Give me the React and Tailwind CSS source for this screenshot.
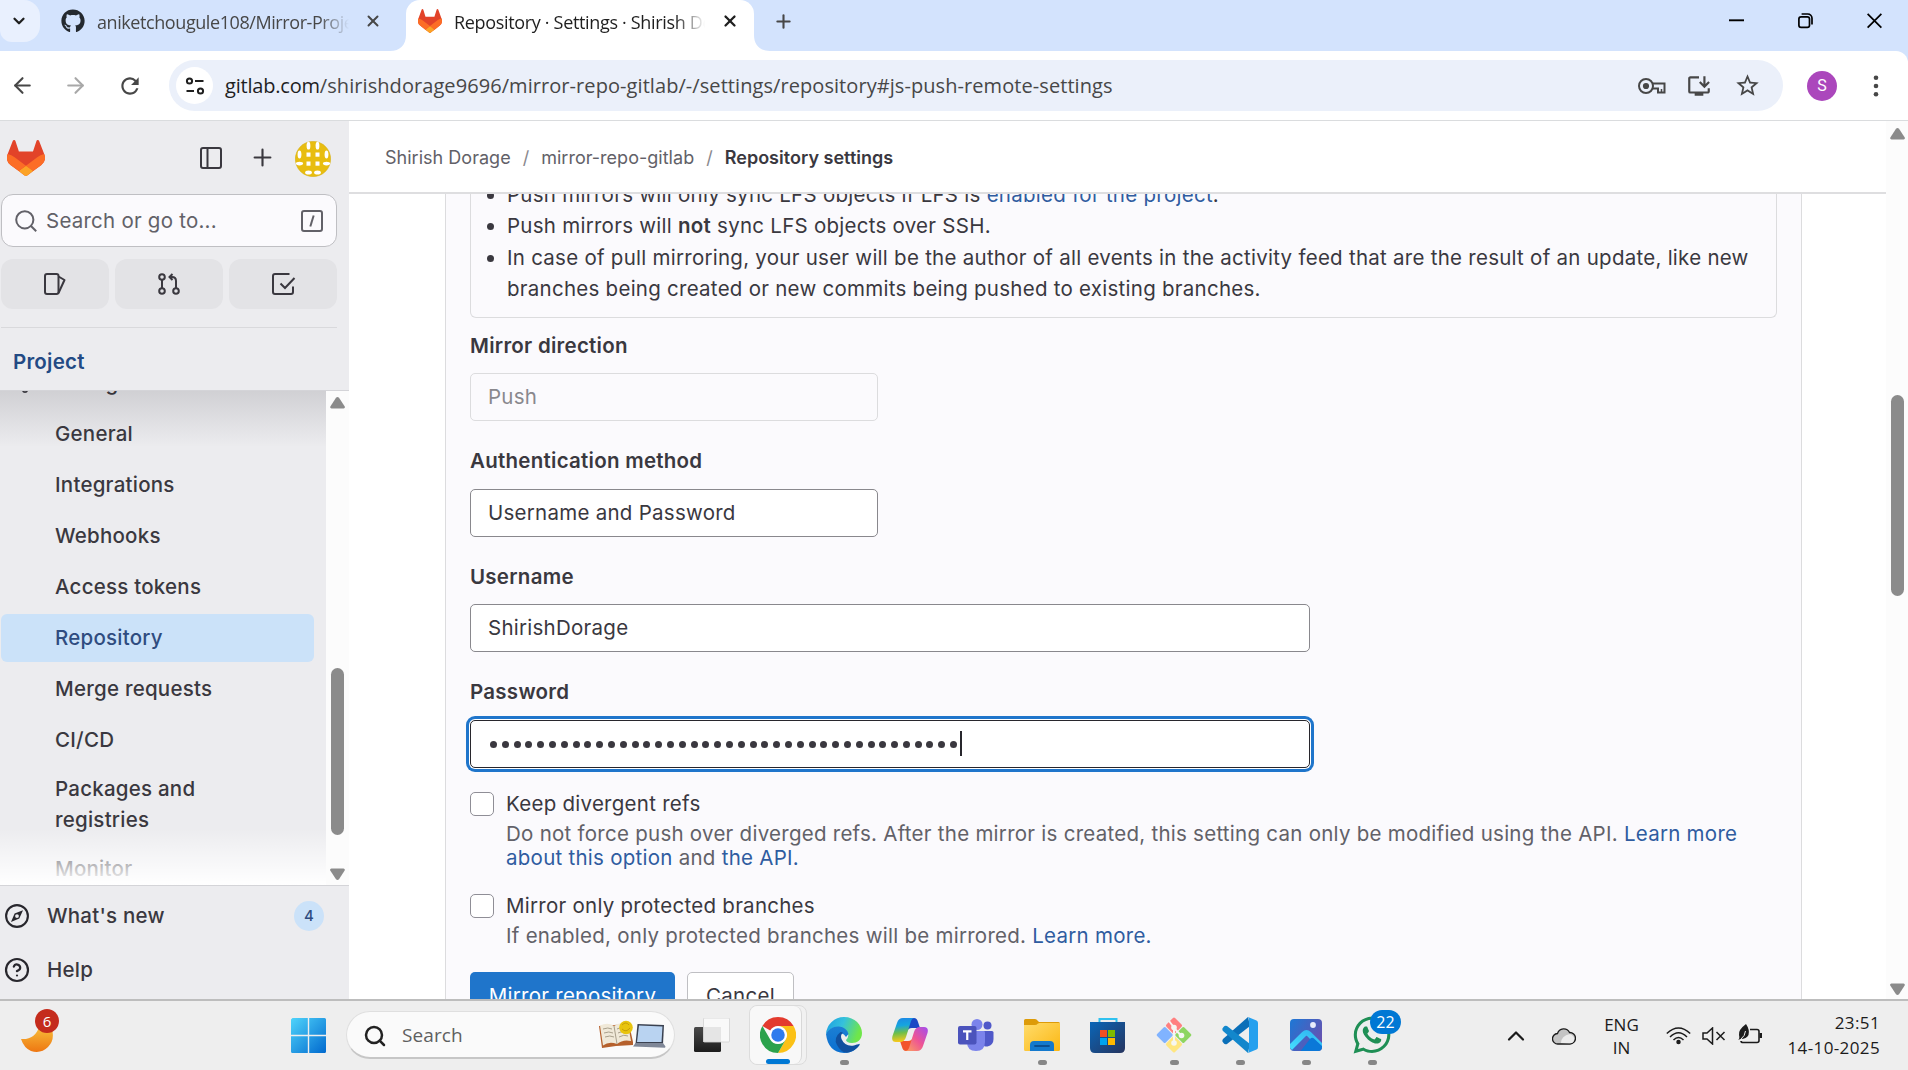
import React from "react";
import { ArrowLeft, ArrowRight, ChevronDown, ChevronUp, Plus, Search, X, CircleHelp, Settings } from "lucide-react";
import { FaGithub, FaWhatsapp } from "react-icons/fa";
import { MdRefresh, MdOutlineInstallDesktop, MdStarBorder } from "react-icons/md";

const INTER = "font-['Inter','Liberation_Sans',sans-serif]";
const SEGOE = "font-['Open_Sans','Noto_Sans',sans-serif]";

function Tanuki({ className }) {
  return (
    <svg viewBox="0 0 25 24" preserveAspectRatio="none" className={className}>
      <path fill="#E24329" d="m24.507 9.5-.034-.09L21.082.562a.896.896 0 0 0-1.694.091l-2.29 7.01H7.825L5.535.653a.898.898 0 0 0-1.694-.09L.451 9.411.416 9.5a6.297 6.297 0 0 0 2.09 7.278l.012.01.03.022 5.16 3.867 2.56 1.935 1.554 1.176a1.051 1.051 0 0 0 1.268 0l1.555-1.176 2.56-1.935 5.197-3.89.014-.01A6.297 6.297 0 0 0 24.507 9.5Z" />
      <path fill="#FC6D26" d="m24.507 9.5-.034-.09a11.44 11.44 0 0 0-4.56 2.051l-7.447 5.632 4.742 3.584 5.197-3.89.014-.01A6.297 6.297 0 0 0 24.507 9.5Z" />
      <path fill="#FCA326" d="m7.707 20.677 2.56 1.935 1.555 1.176a1.051 1.051 0 0 0 1.268 0l1.555-1.176 2.56-1.935-4.743-3.584-4.755 3.584Z" />
      <path fill="#FC6D26" d="M5.01 11.461a11.43 11.43 0 0 0-4.56-2.05L.416 9.5a6.297 6.297 0 0 0 2.09 7.278l.012.01.03.022 5.16 3.867 4.745-3.584-7.444-5.632Z" />
    </svg>
  );
}

function TabStrip() {
  return (
    <div className={`flex h-[51px] shrink-0 bg-[#d3e3fd] ${SEGOE}`}>
      <div className="flex h-[42px] w-10 shrink-0 items-center justify-center rounded-r-2xl rounded-bl-xl bg-[#e9f0fe]">
        <ChevronDown className="mr-0.5 size-[18px] text-[#1f1f1f]" strokeWidth={3} />
      </div>
      <div className="flex h-[42px] w-[366px] shrink-0 items-center pl-[21px]">
        <FaGithub className="size-6 shrink-0 text-[#24292f]" />
        <div className="ml-3 w-[252px] overflow-hidden whitespace-nowrap mask-r-from-88% pt-0.5 text-[18px] leading-6 tracking-[-0.42px] text-[#474747]">
          aniketchougule108/Mirror-Project
        </div>
        <X className="ml-[15px] size-[18px] shrink-0 text-[#474747]" strokeWidth={2.6} />
      </div>
      <div className="relative flex h-[51px] w-[348px] shrink-0 items-start rounded-t-[14px] bg-white pl-3">
        <svg className="absolute bottom-0 -left-4 size-4" viewBox="0 0 16 16"><path fill="#fff" d="M16 0v16H0C10 16 16 10 16 0Z" /></svg>
        <svg className="absolute -right-4 bottom-0 size-4" viewBox="0 0 16 16"><path fill="#fff" d="M0 0v16h16C6 16 0 10 0 0Z" /></svg>
        <Tanuki className="mt-[9px] h-6 w-6 shrink-0" />
        <div className="mt-[7px] ml-3 w-[251px] overflow-hidden pt-[3px] whitespace-nowrap mask-r-from-88% text-[18px] leading-6 tracking-[-0.33px] text-[#1f1f1f]">
          Repository · Settings · Shirish Dorage
        </div>
        <X className="mt-3 ml-4 size-[18px] shrink-0 text-[#1f1f1f]" strokeWidth={3} />
      </div>
      <Plus className="mt-[11px] ml-[19px] size-[21px] text-[#474747]" strokeWidth={2.4} />
      <div className="mt-[13px] mr-[26px] ml-auto flex h-4 gap-[54px] text-black">
        <svg className="h-4 w-[15px]" viewBox="0 0 15 16"><path d="M0 7.3h15" stroke="currentColor" strokeWidth="1.9" /></svg>
        <svg className="h-4 w-[15px]" viewBox="0 0 15 16" fill="none" stroke="currentColor" strokeWidth="1.7"><rect x="0.9" y="3.8" width="10.6" height="10.6" rx="2.2" /><path d="M3.6 1h6.2A4.2 4.2 0 0 1 14 5.2v6.2" /></svg>
        <svg className="h-4 w-[15px]" viewBox="0 0 15 16"><path d="m.6.9 13.8 13.8M14.4.9.6 14.7" stroke="currentColor" strokeWidth="1.8" /></svg>
      </div>
    </div>
  );
}

function Toolbar() {
  return (
    <div className="h-[70px] shrink-0 bg-[#d3e3fd]">
      <div className="flex h-[70px] items-center rounded-tr-xl border-b border-[#dadcde] bg-white text-[#474747]">
        <ArrowLeft className="ml-[10px] size-[25px]" strokeWidth={2} />
        <ArrowRight className="ml-7 size-[25px] text-[#a8a8a8]" strokeWidth={2} />
        <MdRefresh className="ml-[29px] size-[26px]" />
        <div className="ml-[26px] flex h-[51px] w-[1614px] items-center rounded-full bg-[#ebf0fa]">
          <div className="ml-[7px] flex size-[37px] items-center justify-center rounded-full bg-white">
            <svg className="size-5" viewBox="0 0 20 20" fill="none" stroke="#1f1f1f" strokeWidth="2">
              <circle cx="4.5" cy="5" r="2.6" /><path d="M10 5h8.5M1.5 15H9" /><circle cx="15.5" cy="15" r="2.6" />
            </svg>
          </div>
          <div className={`ml-3 flex text-[20px] leading-[26px] whitespace-nowrap ${SEGOE}`}>
            <span className="tracking-[-0.2px] text-[#1f1f1f]">gitlab.com</span>
            <span className="tracking-[0.07px]">/shirishdorage9696/mirror-repo-gitlab/-/settings/repository#js-push-remote-settings</span>
          </div>
          <svg className="ml-auto h-[18px] w-[28px]" viewBox="0 0 28 18" fill="none" stroke="currentColor" strokeWidth="2">
            <circle cx="8" cy="9" r="7" /><circle cx="8" cy="9" r="3.1" fill="currentColor" stroke="none" />
            <path d="M14.5 6.5H26.5V15.5H20V11.5H14.5" /><path d="M23.5 15.5V12" strokeWidth="1.5" />
          </svg>
          <MdOutlineInstallDesktop className="ml-[20px] size-[26px]" />
          <MdStarBorder className="mr-[22px] ml-[22px] size-[27px]" />
        </div>
        <div className="ml-6 flex size-[30px] items-center justify-center rounded-full bg-[#ab47bc] font-['Roboto',sans-serif] text-[16px] text-white">S</div>
        <svg className="ml-[36px] h-[22px] w-[6px]" viewBox="0 0 6 22" fill="#474747"><circle cx="3" cy="2.8" r="2.3" /><circle cx="3" cy="11" r="2.3" /><circle cx="3" cy="19.2" r="2.3" /></svg>
      </div>
    </div>
  );
}

function Scrollbar({ className, thumb }) {
  const arrow = "M6 .8q1.5-1.4 3 0l5.6 8.4q1 2-1 2.3H1.5q-2-.3-1-2.3Z";
  return (
    <div className={`flex flex-col items-center bg-[#fcfcfc] ${className}`}>
      <svg className="h-3 w-[15px] shrink-0" viewBox="0 0 15 12"><path fill="#8b8b8b" d={arrow} /></svg>
      <div className={`w-[13px] shrink-0 rounded-full bg-[#8b8b8b] ${thumb}`} />
      <svg className="mt-auto h-3 w-[15px] shrink-0 rotate-180" viewBox="0 0 15 12"><path fill="#8b8b8b" d={arrow} /></svg>
    </div>
  );
}

function Avatar() {
  return (
    <svg className="size-9" viewBox="0 0 36 36">
      <circle cx="18" cy="18" r="17.6" fill="#e8bd10" stroke="#d5ae10" strokeWidth="0.6" />
      <g fill="#fff">
        {[13.5, 22.5].map((x) => (
          <g key={x}>
            <ellipse cx={x} cy="4.7" rx="1.9" ry="3.9" />
            <rect x={x - 2} y="11.5" width="4" height="4.2" />
            <rect x={x - 2} y="20.5" width="4" height="4.2" />
            <ellipse cx={x} cy="31.5" rx="3.4" ry="2" />
          </g>
        ))}
        {[4.5, 31.5].map((x) => (
          <g key={x}>
            <ellipse cx={x} cy="13.6" rx="1.9" ry="4" />
            <ellipse cx={x} cy="22.6" rx="3.6" ry="1.8" />
          </g>
        ))}
      </g>
    </svg>
  );
}

const single = "pt-1.5 pb-2";
const double = "py-1.5";
const navItems = [
  ["General", single],
  ["Integrations", single],
  ["Webhooks", single],
  ["Access tokens", single],
  ["Repository", `${single} bg-[#cbe2f9] text-[#2f4c80]`],
  ["Merge requests", single],
  ["CI/CD", single],
  ["Packages and registries", double],
  ["Monitor", double],
];

function Sidebar() {
  return (
    <aside className={`flex w-[349px] shrink-0 flex-col bg-[#ececef] text-[20.5px] tracking-[0.23px] text-[#3a383f] ${INTER}`}>
      <div className="flex h-[73px] shrink-0 items-center pt-0.5 pl-[7px]">
        <Tanuki className="-mt-0.5 h-9 w-[38px]" />
        <svg className="-mt-0.5 ml-[155px] size-[22px]" viewBox="0 0 22 22" fill="none" stroke="#3a383f" strokeWidth="2"><rect x="1" y="1" width="20" height="20" rx="2" /><path d="M7.5 1v20" /></svg>
        <Plus className="-mt-0.5 mr-[19px] ml-[27px] size-[27px]" strokeWidth={1.9} />
        <Avatar />
      </div>
      <div className="ml-px flex h-[53px] w-[336px] shrink-0 items-center rounded-[12px] border border-[#bfbfc3] bg-[#fbfafd] pl-[13px] text-[#626168]">
        <svg className="size-[22px]" viewBox="0 0 22 22" fill="none" stroke="currentColor" strokeWidth="2"><circle cx="9.8" cy="9.8" r="8.6" /><path d="m16 16 5.2 5.2" /></svg>
        <span className="mt-px ml-[9px]">Search or go to...</span>
        <svg className="mr-[13px] ml-auto size-[22px]" viewBox="0 0 22 22" fill="none" stroke="currentColor" strokeWidth="2"><rect x="1" y="1" width="20" height="20" rx="2" /><path d="M12.7 5.5 9.3 16.5" /></svg>
      </div>
      <div className="mt-3 ml-px flex w-[336px] shrink-0 gap-1.5">
        <div className="flex h-[50px] flex-1 items-center justify-center rounded-[12px] bg-[#e3e3e6]">
          <svg className="size-[22px]" viewBox="0 0 22 22" fill="none" stroke="#3a383f" strokeWidth="2"><rect x="1" y="1" width="13.5" height="20" rx="2" /><path d="M14.5 3.5 20.5 7 14.5 20" strokeLinejoin="round" /></svg>
        </div>
        <div className="flex h-[50px] flex-1 items-center justify-center rounded-[12px] bg-[#e3e3e6]">
          <svg className="size-[22px]" viewBox="0 0 22 22" fill="none" stroke="#3a383f" strokeWidth="2"><circle cx="4" cy="4" r="2.8" /><circle cx="4" cy="18" r="2.8" /><circle cx="18" cy="18" r="2.8" /><path d="M4 7v8M18 15V8q0-4-4-4h-2M14.5 1 11.5 4l3 3" /></svg>
        </div>
        <div className="flex h-[50px] flex-1 items-center justify-center rounded-[12px] bg-[#e3e3e6]">
          <svg className="ml-0.5 h-[22px] w-6" viewBox="0 0 24 22" fill="none" stroke="#3a383f" strokeWidth="2"><path d="M17.5 1H3Q1 1 1 3v16q0 2 2 2h16q2 0 2-2v-5.5M8.5 10.5l4.5 4.5L22.5 5" /></svg>
        </div>
      </div>
      <div className="mt-[18px] ml-px h-px w-[336px] shrink-0 bg-[#d9d9dc]" />
      <div className="flex h-[63px] shrink-0 items-center border-b border-[#d4d4d8] pt-1.5 pl-[13px] font-semibold text-[#234a84]">Project</div>

      <div className="flex min-h-0 flex-1">
        <div className="relative h-[494px] w-[326px] overflow-hidden">
          <div className="-mt-8 flex flex-col gap-[3px] font-medium">
            <div className="flex h-12 items-center gap-3 pl-[14px]"><Settings className="size-[22px]" /><span>Settings</span></div>
            {navItems.map(([t, cls]) => (
              <div key={t} className={`ml-px flex min-h-12 w-[313px] items-center rounded-[6px] pr-20 pl-[54px] leading-[31px] ${cls}`}>
                {t}
              </div>
            ))}
          </div>
          <div className="absolute inset-x-0 top-0 h-14 bg-linear-to-b from-[#28272d24] to-transparent" />
          <div className="absolute inset-x-0 bottom-0 h-14 bg-linear-to-t from-white to-transparent" />
        </div>
        <Scrollbar className="w-[23px] pt-1.5 pb-[5px]" thumb="mt-[259px] h-[167px]" />
      </div>

      <div className="flex h-[114px] shrink-0 flex-col border-t border-[#d4d4d8] pt-[5px] font-medium">
        <div className="flex h-[50px] items-center pl-[5px]">
          <svg className="size-6" viewBox="0 0 24 24" fill="none" stroke="#28272d" strokeWidth="2.1"><circle cx="12" cy="12" r="10.9" /><path fill="#28272d" fillRule="evenodd" stroke="none" d="M18 6.2 14.3 14.5 6 17.9 9.6 9.6ZM12 10.2a1.9 1.9 0 1 0 0 3.8 1.9 1.9 0 0 0 0-3.8Z" /></svg>
          <span className="ml-[18px]">What's new</span>
          <div className="mr-[25px] ml-auto flex size-[30px] items-center justify-center rounded-full bg-[#cbe2f9] text-[15px] tracking-normal text-[#2f4c80]">4</div>
        </div>
        <div className="mt-1 flex h-[50px] items-center pl-[5px]">
          <CircleHelp className="size-6 scale-110 text-[#28272d]" strokeWidth={2} />
          <span className="ml-[18px]">Help</span>
        </div>
      </div>
    </aside>
  );
}

function Check({ label, children, className = "" }) {
  return (
    <div className={`flex shrink-0 ${className}`}>
      <div className="mt-[3px] size-6 shrink-0 rounded-[5px] border border-[#8f8e96] bg-white" />
      <div className="ml-3">
        <div className="pt-px leading-[28px]">{label}</div>
        <div className="mt-1 leading-6 text-[#626168]">{children}</div>
      </div>
    </div>
  );
}

function Main() {
  const field = "flex h-12 shrink-0 items-center rounded-[5px] border pl-[17px]";
  const label = "shrink-0 leading-[31px] font-semibold";
  const link = "text-[#2f5ca0]";
  return (
    <main className={`flex min-w-0 flex-1 flex-col bg-white text-[20.5px] tracking-[0.26px] text-[#3a383f] ${INTER}`}>
      <div className="flex h-[73px] shrink-0 items-center border-b-2 border-[#dedee0] pt-px pl-9 text-[18px] tracking-[0.02px] text-[#626168]">
        <span>Shirish Dorage</span>
        <span className="mx-3 text-[#89888d]">/</span>
        <span>mirror-repo-gitlab</span>
        <span className="mx-3 text-[#89888d]">/</span>
        <span className="font-semibold text-[#3a383f]">Repository settings</span>
      </div>
      <div className="ml-24 flex h-[805px] w-[1357px] flex-col overflow-hidden border-x border-[#dcdcde] bg-[#fbfafd] pl-6 whitespace-nowrap">
        <div className="h-[124px] w-[1307px] shrink-0 rounded-b-[6px] border border-t-0 border-[#dcdcde] pl-9 leading-[31px]">
          <ul className="-mt-[15px] flex list-disc flex-col">
            <li>Push mirrors will only sync LFS objects if LFS is <span className={link}>enabled for the project</span>.</li>
            <li>Push mirrors will <b className="font-semibold">not</b> sync LFS objects over SSH.</li>
            <li className="mt-px">In case of pull mirroring, your user will be the author of all events in the activity feed that are the result of an update, like new<br />branches being created or new commits being pushed to existing branches.</li>
          </ul>
        </div>
        <div className={`mt-3 ${label}`}>Mirror direction</div>
        <div className={`mt-3 w-[408px] border-[#dcdcde] text-[#89888d] ${field}`}>Push</div>
        <div className={`mt-6 ${label}`}>Authentication method</div>
        <div className={`mt-[13px] w-[408px] border-[#89888d] bg-white ${field}`}>Username and Password</div>
        <div className={`mt-6 ${label}`}>Username</div>
        <div className={`mt-3 w-[840px] border-[#89888d] bg-white ${field}`}>ShirishDorage</div>
        <div className={`mt-6 ${label}`}>Password</div>
        <div className={`mt-[13px] w-[840px] border-[#28272d] bg-white ring-[3px] ring-[#1f75cb] ring-offset-1 ring-offset-white ${field}`}>
          <div className="flex gap-[4.8px] pt-px pl-0.5">
            {Array.from({ length: 40 }, (_, i) => <i key={i} className="size-[7px] rounded-full bg-[#3a383f]" />)}
          </div>
          <div className="mb-0.5 ml-[3px] h-[25px] w-[1.5px] bg-[#28272d]" />
        </div>
        <Check label="Keep divergent refs" className="mt-[21px]">
          Do not force push over diverged refs. After the mirror is created, this setting can only be modified using the API. <span className={link}>Learn more</span><br />
          <span className={link}>about this option</span> and <span className={link}>the API.</span>
        </Check>
        <Check label="Mirror only protected branches" className="mt-[21px]">
          If enabled, only protected branches will be mirrored. <span className={link}>Learn more.</span>
        </Check>
        <div className="mt-[24px] flex shrink-0 gap-3">
          <div className="flex h-12 w-[205px] items-center justify-center rounded-[5px] bg-[#1f75cb] text-white">Mirror repository</div>
          <div className="flex h-12 w-[107px] items-center justify-center rounded-[5px] border border-[#bfbfc3] bg-white">Cancel</div>
        </div>
      </div>
    </main>
  );
}

function TaskIcon({ children, dot = "bg-transparent w-[9px]" }) {
  return (
    <div className="relative flex h-[68px] w-[66px] shrink-0 flex-col items-center pt-4">
      <div className="relative size-9">{children}</div>
      <div className={`absolute bottom-1 h-[5px] rounded-full ${dot}`} />
    </div>
  );
}

const running = "w-[9px] bg-[#868686]";

function Taskbar() {
  return (
    <div className={`flex h-[71px] shrink-0 border-t-2 border-[#bdbdbd] bg-[#eeeeee] ${SEGOE}`}>
      <div className="relative mt-[9px] ml-[18px] h-[44px] w-[44px] shrink-0">
        <svg className="absolute top-[17px] left-[2px] h-[26px] w-[34px]" viewBox="0 0 34 26">
          <defs><linearGradient id="moon" x2="0" y2="1"><stop stopColor="#f7bd3a" /><stop offset="1" stopColor="#ee7712" /></linearGradient></defs>
          <path fill="url(#moon)" d="M1 12Q15 13 19 0L32 2Q35 13 28 20 21 27 11 24 4 21 1 12Z" />
        </svg>
        <div className="absolute top-[-1px] left-[17px] flex size-6 items-center justify-center rounded-full bg-[#c42b1c] text-[15px] text-white">6</div>
      </div>
      <svg className="mt-[17px] ml-[229px] size-[35px] shrink-0" viewBox="0 0 35 35">
        <defs><linearGradient id="win" gradientUnits="userSpaceOnUse" x1="0" y1="0" x2="35" y2="35"><stop stopColor="#4fd4fb" /><stop offset="1" stopColor="#0169ce" /></linearGradient></defs>
        <path fill="url(#win)" d="M1.5 0H16.8v16.8H0V1.5ZM18.2 0h15.3q1.5 0 1.5 1.5v15.3H18.2ZM0 18.2h16.8V35H1.5Q0 35 0 33.5ZM18.2 18.2H35v15.3q0 1.5-1.5 1.5H18.2Z" />
      </svg>
      <div className="mt-[10px] ml-5 flex h-12 w-[329px] shrink-0 items-center rounded-full border border-b-2 border-[#dfdfdf] border-b-[#c6c6c6] bg-[#fafafa] pt-0.5 pl-4">
        <Search className="size-6 text-[#222]" strokeWidth={2.5} />
        <span className="ml-[15px] text-[19px] tracking-[0.1px] text-[#5f5f5f]">Search</span>
        <svg className="mr-[7px] mb-0.5 ml-auto h-[30px] w-[68px]" viewBox="0 0 68 30">
          <path fill="#b5602c" d="M0 6l3 22 14-2 17-1V22L30 4Z" />
          <path fill="#f0e9d8" d="M1 5.5Q9 2 15 6L18 24Q10 21 4 25.5ZM15 6Q22 1 29 4L32 21Q24 19 18 24Z" />
          <path stroke="#a9a08c" strokeWidth="1" fill="none" d="M4 9q5-2 9 0M5 13q5-2 9 0M6 17q5-2 9 0M18 9q5-3 9-1M19 13q5-3 9-1M20 17q5-3 9-1M15 6l3 18" />
          <circle cx="27" cy="7.5" r="6.8" fill="#e8c40e" /><path d="M23 5q4-4 7 0M23 9q4 4 8-1" stroke="#c79f06" fill="none" />
          <path fill="#3a4150" d="M38.5 4 65 5l-1 19H36.5Z" /><path fill="#b9d3f1" d="M40 5.5 63.5 6.5l-1 15.5H38Z" />
          <path fill="#7f8797" d="M36.5 23H64l2.5 3.5-.5 1.2L34 26.5Z" />
        </svg>
      </div>
      <div className="ml-[13px] flex shrink-0">
        <div className="flex w-[48px] pt-[17px] pl-[6px]">
          <svg className="h-[35px] w-9" viewBox="0 0 36 35">
            <defs><linearGradient id="tv" x2="0" y2="1"><stop stopColor="#4a4a4a" /><stop offset="1" stopColor="#1c1c1c" /></linearGradient></defs>
            <rect y="9" width="27" height="25" rx="1.5" fill="url(#tv)" /><path d="M9 9h18v15H9Z" fill="#b5b5b5" /><rect x="9.5" width="26" height="24" rx="1" fill="#fff" fillOpacity=".65" stroke="#d2d2d2" strokeWidth=".8" />
          </svg>
        </div>
        <div className="relative mt-1 ml-[13px] flex h-[60px] w-[58px] rounded-lg border border-[#dcdcdc] bg-[#f1f1f1]">
          <div className="relative flex h-full w-[52px] justify-center rounded-lg border-r border-[#d8d8d8] bg-[#f8f8f8] pt-[11px]">
            <svg className="ml-[5px] size-9" viewBox="0 0 48 48">
              <path fill="#e33b2e" d="M24 0A24 24 0 0 1 44.8 12H24A12 12 0 0 0 13.6 18L3.2 12A24 24 0 0 1 24 0Z" />
              <path fill="#fbc116" d="M44.8 12A24 24 0 0 1 24 48L34.4 30A12 12 0 0 0 34.4 18 12 12 0 0 0 24 12Z" />
              <path fill="#2ba24c" d="M24 48A24 24 0 0 1 3.2 12L13.6 30A12 12 0 0 0 34.4 30Z" />
              <circle cx="24" cy="24" r="11.5" fill="#fff" /><circle cx="24" cy="24" r="9" fill="#2f7bed" />
            </svg>
            <div className="absolute bottom-0 left-4 h-[5px] w-6 rounded-full bg-[#0078d4]" />
          </div>
        </div>
      </div>
      <div className="ml-1 flex shrink-0">
        <TaskIcon dot={running}>
          <svg className="size-9" viewBox="0 0 36 36">
            <defs>
              <linearGradient id="e1" x2="1" y2=".3"><stop stopColor="#1b9de2" /><stop offset=".5" stopColor="#35c1dc" /><stop offset="1" stopColor="#6fe64a" /></linearGradient>
              <linearGradient id="e2" x2="0" y2="1"><stop stopColor="#1c7fd4" /><stop offset="1" stopColor="#0a6fd0" /></linearGradient>
            </defs>
            <path fill="url(#e1)" d="M0 17A18 18 0 0 1 18 0C29 0 36 8 36 16 36 23 31 26 26 26 22 26 20 24.5 20 23Q23 20 22 17 20 11 13 10 4 10 0 17Z" />
            <path fill="url(#e2)" d="M0 17Q4 9 13 9.5 21 10.5 22.5 17L20 20Q16 14 14 19 12 28 22 30.5 29 31 34 26.5 29 36 18 36 2 35 0 17Z" />
            <path fill="#10509f" d="M14.5 15Q7 21 11 28 15 35.5 21 35.7 30 34 34 27.5 33 26.5 28 28.5 19 30 15.5 22 14 18 17 15.5Z" />
          </svg>
        </TaskIcon>
        <TaskIcon>
          <svg className="size-9" viewBox="0 0 36 36">
            <defs>
              <linearGradient id="c1" x2=".1" y2="1"><stop stopColor="#1d86e6" /><stop offset=".35" stopColor="#15a5e0" /><stop offset=".65" stopColor="#6fbf4a" /><stop offset="1" stopColor="#f6c91c" /></linearGradient>
              <linearGradient id="c2" x1="1" x2="0" y2="1"><stop stopColor="#a24ef0" /><stop offset=".5" stopColor="#ee5494" /><stop offset="1" stopColor="#fca55c" /></linearGradient>
            </defs>
            <path fill="#1a49c5" d="M17 1h5q3 0 4 4l2 6h-8q-4 0-5 4Z" />
            <path fill="#f2552c" d="M19 34h-5q-3 0-4-4l-2-6h8q4 0 5-4Z" />
            <path fill="url(#c1)" d="M11 1H23q-3 0-4 3l-5 16q-1.5 5-6 5H4q-5 0-3.5-6L5 6q1.5-5 6-5Z" />
            <path fill="url(#c2)" d="M25 34H13q3 0 4-3l5-16q1.5-5 6-5h4q5 0 3.5 6L31 29q-1.5 5-6 5Z" />
          </svg>
        </TaskIcon>
        <TaskIcon>
          <svg className="size-9" viewBox="0 0 36 36">
            <circle cx="19" cy="7.5" r="5.5" fill="#7b83eb" /><circle cx="29.5" cy="8.5" r="4" fill="#5059c9" />
            <path fill="#5059c9" d="M25 14h9q1.5 0 1.5 1.5V22q0 6-6 7.5-4.5 0-5-2Z" />
            <path fill="#7b83eb" d="M10 14h16q1 0 1 1.5V25q0 9-9 9t-9-9Z" />
            <rect y="9" width="18.5" height="18.5" rx="2" fill="#4b53bc" />
            <path d="M5 14.3h8.5M9.25 14v9" stroke="#fff" strokeWidth="2.2" />
          </svg>
        </TaskIcon>
        <TaskIcon dot={running}>
          <svg className="size-9" viewBox="0 0 36 36">
            <defs><linearGradient id="f1" x2="1" y2="1"><stop stopColor="#ffdc6b" /><stop offset="1" stopColor="#fbb713" /></linearGradient></defs>
            <path fill="#dd9b08" d="M0 3.5Q0 2 1.5 2H11q1.5 0 3 2l1 1h19.5q1.5 0 1.5 1.5V14H0Z" />
            <path fill="url(#f1)" d="M0 8h11q1.5 0 3-1.5L15.5 6H36v26.5q0 1.5-1.5 1.5h-33Q0 34 0 32.5Z" />
            <path fill="#1479cd" d="M6 34V28q0-4 4-4h16q4 0 4 4v6Z" /><path d="M11 29h14" stroke="#0b4f92" strokeWidth="1.8" strokeLinecap="round" />
          </svg>
        </TaskIcon>
        <TaskIcon>
          <svg className="size-9" viewBox="0 0 36 36">
            <defs><linearGradient id="s1" x2="1" y2="1"><stop stopColor="#0a66b8" /><stop offset="1" stopColor="#26345e" /></linearGradient></defs>
            <path d="M9.5 7V2h17v5" fill="none" stroke="#2fc1ef" strokeWidth="2" />
            <path fill="url(#s1)" d="M0 5h35v26q0 5-5 5H5q-5 0-5-5Z" />
            <path fill="#f25022" d="M10 13h7v7h-7Z" /><path fill="#7fba00" d="M18 13h7v7h-7Z" /><path fill="#00a4ef" d="M10 21h7v7h-7Z" /><path fill="#ffb900" d="M18 21h7v7h-7Z" />
          </svg>
        </TaskIcon>
        <TaskIcon dot={running}>
          <svg className="size-9" viewBox="0 0 36 36">
            <g transform="rotate(45 18 18)">
              <rect x="5.3" y="5.3" width="12.2" height="12.2" rx="1.5" fill="#ff8080" /><rect x="18.5" y="5.3" width="12.2" height="12.2" rx="1.5" fill="#8ed561" />
              <rect x="5.3" y="18.5" width="12.2" height="12.2" rx="1.5" fill="#80b3ff" /><rect x="18.5" y="18.5" width="12.2" height="12.2" rx="1.5" fill="#ffe680" />
            </g>
            <path d="M13 4l5 6.5V26M18 11l7 7.5" fill="none" stroke="#f6f6f2" strokeWidth="2" /><g fill="#f6f6f2"><circle cx="18" cy="10.5" r="2.8" /><circle cx="18" cy="26" r="2.8" /><circle cx="25.5" cy="18.5" r="2.8" /></g>
          </svg>
        </TaskIcon>
        <TaskIcon dot={running}>
          <svg className="size-9" viewBox="0 0 36 36">
            <path fill="#0a6fb8" d="M26 0 28 9 5 27Q3 28 1.5 26L.5 24.5Q0 23 1 22Z" />
            <path fill="#1287cc" d="M26 36 28 27 5 9Q3 8 1.5 10L.5 11.5Q0 13 1 14Z" />
            <path fill="#25a0ee" d="M26 0 34.5 3.5Q36 4 36 6V30Q36 32 34.5 32.5L26 36Q27 35 27 33V3Q27 1 26 0Z" />
          </svg>
        </TaskIcon>
        <TaskIcon dot={running}>
          <svg className="size-9" viewBox="0 0 36 36">
            <defs>
              <linearGradient id="p1" x2="1" y2=".6"><stop stopColor="#1c78d6" /><stop offset="1" stopColor="#6652b0" /></linearGradient>
              <linearGradient id="p2" x1="1" x2="0" y2="1"><stop stopColor="#2fb5f0" /><stop offset="1" stopColor="#45dcff" /></linearGradient>
              <clipPath id="pc"><rect x="2" y="2" width="32" height="32" rx="4" /></clipPath>
            </defs>
            <g clipPath="url(#pc)"><rect x="2" y="2" width="32" height="32" fill="url(#p1)" /><path d="M2 31 16 17q2.5-2.2 5 0L34 30" fill="none" stroke="url(#p2)" strokeWidth="5.5" /><path fill="#0b78d8" d="M11 36 22 22q2-2.4 4.5 0L36 31v5Z" /></g>
            <circle cx="25" cy="8" r="2.9" fill="#e8ecfb" />
          </svg>
        </TaskIcon>
        <TaskIcon dot={running}>
          <FaWhatsapp className="-mt-[3px] -ml-[3px] size-[42px] text-[#1f8f55]" />
          <div className="absolute -top-[7px] left-4 flex h-6 w-[31px] items-center justify-center rounded-full bg-[#0078d4] text-[16px] text-white">22</div>
        </TaskIcon>
      </div>
      <div className="mr-[28px] ml-auto flex h-[69px] shrink-0 items-center text-[17px] text-[#1b1b1b]">
        <ChevronUp className="size-7" strokeWidth={1.9} />
        <svg className="ml-[22px] h-[18px] w-6" viewBox="0 0 24 18"><path d="M6 17A5 5 0 0 1 5.5 6.5 6.5 6.5 0 0 1 17.5 5.5 5.6 5.6 0 0 1 18 17Z" fill="#c4c4c4" stroke="#1b1b1b" strokeWidth="1.3" /><path d="M9 16Q9 9 18 7q5 2 4 6t-5 3.2Z" fill="#ececec" /></svg>
        <div className="ml-[26px] w-[38px] text-center leading-[23px]">ENG<br />IN</div>
        <svg className="ml-[26px] h-[18px] w-[25px]" viewBox="0 0 25 18" fill="none" stroke="#1b1b1b" strokeWidth="1.5"><path d="M.8 6.5Q12.5-4.5 24.2 6.5M4 10Q12.5 1.5 21 10M7.5 13Q12.5 8 17.5 13" /><circle cx="12.5" cy="15" r="1.5" fill="#1b1b1b" /></svg>
        <svg className="ml-[11px] h-[18px] w-6" viewBox="0 0 24 18" fill="none" stroke="#1b1b1b" strokeWidth="1.5"><path d="M1 6h4L10.5 1v16L5 12H1ZM14.5 5l8 8M22.5 5l-8 8" /></svg>
        <svg className="-mt-1 ml-3 h-[22px] w-[25px]" viewBox="0 0 25 22">
          <path d="M12 6.5h7q2 0 2 2v9q0 2-2 2H5q-2 0-2-1.5" fill="none" stroke="#1b1b1b" strokeWidth="1.6" /><path d="M21.5 10h2.5v5h-2.5Z" fill="#1b1b1b" />
          <path d="M0 17q2-1 1-5-1-5 7-11 4 6 2.5 11-2 4-8 4Z" fill="#1b1b1b" /><path d="M7.5 8Q7 13 3 16" fill="none" stroke="#eee" strokeWidth="1" />
        </svg>
        <div className="mb-0.5 ml-6 text-right leading-[25px] tracking-[0.38px]">23:51<br />14-10-2025</div>
      </div>
    </div>
  );
}

export default function App() {
  return (
    <div className="flex h-[1070px] w-[1908px] flex-col overflow-hidden bg-white">
      <TabStrip />
      <Toolbar />
      <div className="flex h-[878px] shrink-0">
        <Sidebar />
        <Main />
        <Scrollbar className="w-[22px] pt-[7px] pb-1" thumb="mt-[255px] h-[201px]" />
      </div>
      <Taskbar />
    </div>
  );
}
